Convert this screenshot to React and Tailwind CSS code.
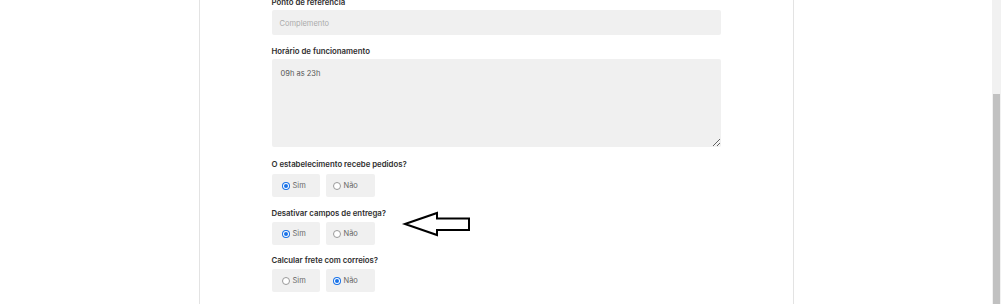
import React from "react";

function Radio({ checked }) {
  return checked ? (
    <span className="w-[8px] h-[8px] rounded-full bg-[#1a73e8] flex items-center justify-center shrink-0">
      <span className="w-[4px] h-[4px] rounded-full bg-[#1a73e8] ring-1 ring-white" />
    </span>
  ) : (
    <span className="w-[8px] h-[8px] rounded-full border border-[#9a9a9a] bg-white shrink-0" />
  );
}

function YesNo({ value }) {
  return (
    <div className="flex gap-[6px]">
      <div className="w-[48px] h-[23px] bg-[#f0f0f0] rounded-[2px] flex items-center pl-[10px] gap-[3px]">
        <Radio checked={value === "sim"} />
        <span className="text-[7.5px] leading-none text-[#666] pt-[1px]">Sim</span>
      </div>
      <div className="w-[49px] h-[23px] bg-[#f0f0f0] rounded-[2px] flex items-center pl-[7px] gap-[3px]">
        <Radio checked={value === "nao"} />
        <span className="text-[7.5px] leading-none text-[#666] pt-[1px]">Não</span>
      </div>
    </div>
  );
}

function Label({ children, className = "" }) {
  return (
    <p className={`h-[14px] leading-[14px] text-[7.8px] font-semibold text-[#2e2e2e] ${className}`}>{children}</p>
  );
}

export default function App() {
  return (
    <div className="h-[304px] w-[1001px] overflow-hidden flex bg-white" style={{ fontFamily: "Inter, 'Noto Sans', sans-serif" }}>
      <div className="flex-1 flex justify-center">
        <div className="relative w-[595px] border-x border-[#e3e3e3] px-[72px] flex flex-col">
          <Label className="-mt-[5px]">Ponto de referência</Label>
          <div className="mt-[1px] h-[25px] bg-[#f0f0f0] rounded-[2px] flex items-center pl-[8px] pt-[2px] text-[7.5px] text-[#aaa]">
            Complemento
          </div>

          <Label className="mt-[9px]">Horário de funcionamento</Label>
          <textarea
            readOnly
            defaultValue="09h as 23h"
            className="mt-[1px] h-[88px] bg-[#f0f0f0] rounded-[2px] px-[9px] pt-[9px] text-[7.5px] text-[#555] outline-none"
          />

          <Label className="mt-[10px]">O estabelecimento recebe pedidos?</Label>
          <div className="mt-[3px]"><YesNo value="sim" /></div>

          <Label className="mt-[9px]">Desativar campos de entrega?</Label>
          <div className="mt-[2px]"><YesNo value="sim" /></div>

          <Label className="mt-[8px]">Calcular frete com correios?</Label>
          <div className="mt-[2px]"><YesNo value="nao" /></div>

          {/* annotation arrow */}
          <svg className="absolute left-[200px] top-[208px]" width="74" height="32" viewBox="0 0 74 32">
            <polygon
              points="5,16 37,5 37,10.5 69,10.5 69,22 37,22 37,27"
              fill="white"
              stroke="black"
              strokeWidth="2"
            />
          </svg>
        </div>
      </div>

      <div className="w-[9px] bg-[#f1f1f1] flex flex-col">
        <div className="h-[94px]" />
        <div className="flex-1 ml-[1px] w-[7px] bg-[#c1c1c1]" />
      </div>
    </div>
  );
}
